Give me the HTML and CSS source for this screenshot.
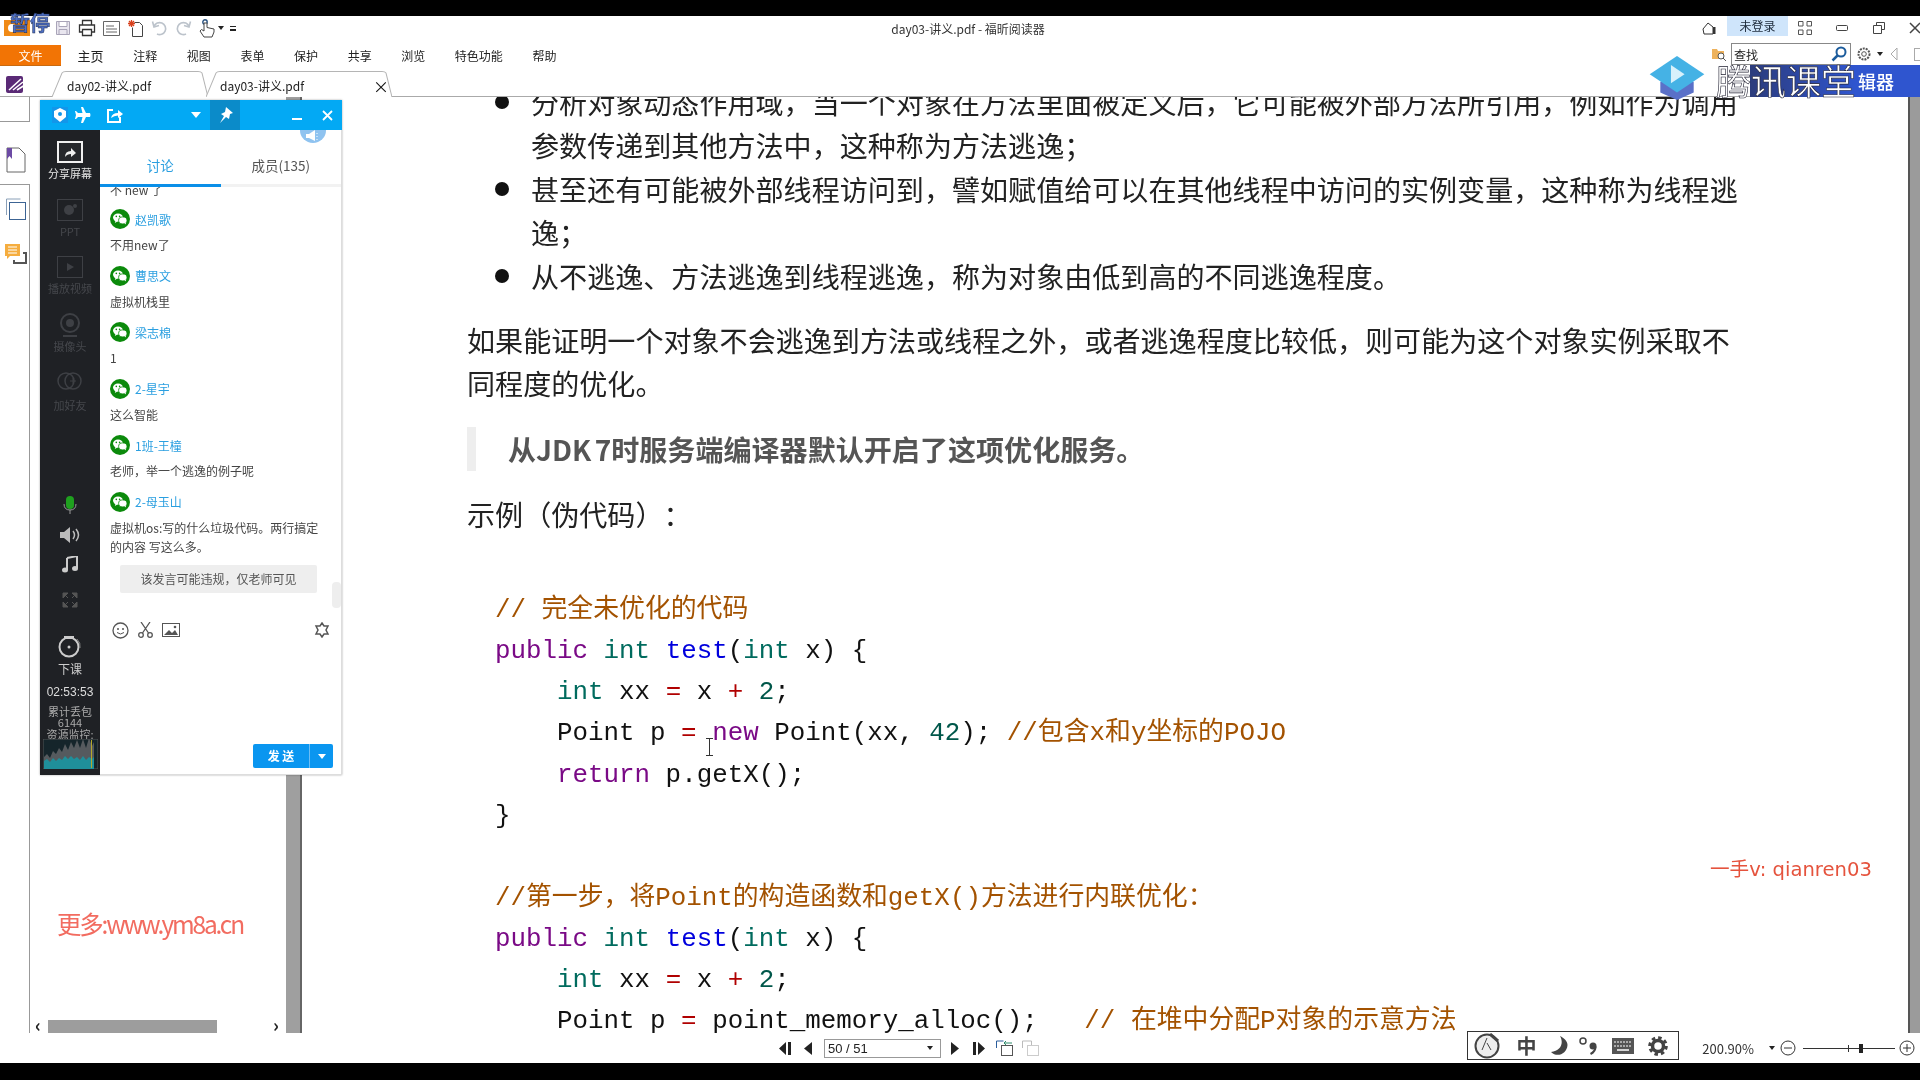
FILE: index.html
```html
<!DOCTYPE html>
<html lang="zh-CN">
<head>
<meta charset="utf-8">
<title>day03-讲义.pdf - 福昕阅读器</title>
<link rel="stylesheet" href="styles.css">
</head>
<body>
<svg class="defs" width="0" height="0" aria-hidden="true">
  <symbol id="wx" viewBox="0 0 20 20">
    <circle cx="10" cy="10" r="10" fill="#0b8a0b"/>
    <ellipse cx="8" cy="8.6" rx="5" ry="4.2" fill="#fff"/>
    <path d="M5.6 11.5l-.8 2.4 2.6-1.3z" fill="#fff"/>
    <ellipse cx="12.8" cy="11.4" rx="4.2" ry="3.5" fill="#fff" stroke="#0b8a0b" stroke-width=".8"/>
    <path d="M14.6 14l1.4 1.6-.2-2.4z" fill="#fff"/>
    <circle cx="6.3" cy="7.4" r=".8" fill="#0b8a0b"/><circle cx="9.6" cy="7.4" r=".8" fill="#0b8a0b"/>
  </symbol>
</svg>
<div class="screen">
  <div class="black-top"></div>
  <header class="titlebar">
    <div class="qat">
      <svg class="qat-logo" width="26" height="16" viewBox="0 0 26 16"><rect width="26" height="16" fill="#f08a16"/><circle cx="8" cy="8" r="4" fill="#fff"/></svg>
      <svg width="16" height="16" viewBox="0 0 16 16"><path d="M1.500 1.500h13v13h-13zM4 1.500v5h8v-5M4 14.500v-5h8v5" fill="#e9e6ef" stroke="#a9a4b8"/></svg>
      <svg width="18" height="18" viewBox="0 0 18 18"><path d="M4.500 6V1.500h9V6M4.500 13H1.500V6h15v7h-3M4.500 10.500h9v6h-9z" fill="none" stroke="#333" stroke-width="1.300"/></svg>
      <svg width="17" height="15" viewBox="0 0 17 15"><path d="M.5.5h16v14H.5zM3 5h8M3 8h11M3 11h11" fill="none" stroke="#666"/></svg>
      <svg width="17" height="18" viewBox="0 0 17 18"><path d="M7.500 3.500h5l3 3v11h-10v-9" fill="#fff" stroke="#444"/><path d="M4.500 1v7M1 4.500h7M2 2l5 5M7 2L2 7" stroke="#d8401c" stroke-width="1.300"/></svg>
      <svg width="17" height="16" viewBox="0 0 17 16"><path d="M3 6.500a6 6 0 1 1 3 7.500M1.500 1.500L3 7l5-1.500" fill="none" stroke="#bcc3cb" stroke-width="1.600"/></svg>
      <svg width="17" height="16" viewBox="0 0 17 16"><path d="M14 6.500a6 6 0 1 0-3 7.500M15.500 1.500L14 7 9 5.500" fill="none" stroke="#bcc3cb" stroke-width="1.600"/></svg>
      <svg width="16" height="19" viewBox="0 0 16 19"><circle cx="6" cy="3" r="2.200" fill="none" stroke="#28517f" stroke-width="1.400"/><path d="M5 4v8L2.500 10.500 1 12l4 6h8l2-5v-3l-7-1.500V4z" fill="#fff" stroke="#444"/></svg>
      <span class="caret-dark qat-caret"></span>
      <span class="caret-bar"></span>
    </div>
    <div class="doc-title">day03-讲义.pdf - 福昕阅读器</div>
    <div class="win">
      <svg width="14" height="13" viewBox="0 0 14 13"><path d="M1 7l5-6 5 4v7H2z" fill="#fff" stroke="#333"/><path d="M11 5h2.500v7H11z" fill="#333"/></svg>
      <span class="login">未登录</span>
      <svg width="14" height="14" viewBox="0 0 14 14"><path d="M.500.500h4.500v4.500H.500zM9 .500h4.500v4.500H9zM.500 9h4.500v4.500H.500zM9 9h4.500v4.500H9z" fill="none" stroke="#555"/></svg>
      <svg class="w-min" width="12" height="6" viewBox="0 0 12 6"><rect x=".5" y=".5" width="11" height="5" rx="1" fill="none" stroke="#444"/></svg>
      <svg class="w-res" width="12" height="12" viewBox="0 0 12 12"><path d="M3.500 3V.500h8v7H9M.500 3.500h8v8h-8z" fill="none" stroke="#444"/></svg>
      <svg class="w-close" width="12" height="12" viewBox="0 0 12 12"><path d="M1 1l10 10M11 1L1 11" stroke="#444" stroke-width="1.500"/></svg>
    </div>
  </header>
  <nav class="ribbon">
    <span class="file-btn">文件</span>
    <span class="r-tab home">主页</span><span class="r-tab">注释</span><span class="r-tab">视图</span><span class="r-tab">表单</span><span class="r-tab">保护</span><span class="r-tab">共享</span><span class="r-tab">浏览</span><span class="r-tab">特色功能</span><span class="r-tab">帮助</span>
    <div class="find">
      <svg width="14" height="14" viewBox="0 0 14 14"><path d="M0 2h5l1 2h6v8H0z" fill="#eeb25c"/><circle cx="9" cy="9" r="3" fill="#fff" stroke="#555"/><path d="M11 11l3 3" stroke="#555"/></svg>
      <div class="find-box"><span>查找</span>
        <svg width="16" height="16" viewBox="0 0 16 16"><circle cx="10" cy="6" r="4.500" fill="none" stroke="#1c5c9c" stroke-width="2"/><path d="M6.500 9.500L1.500 14.500" stroke="#1c5c9c" stroke-width="2.500"/></svg>
      </div>
      <svg width="16" height="16" viewBox="0 0 16 16"><circle cx="8" cy="8" r="5.500" fill="none" stroke="#555" stroke-dasharray="2 1" stroke-width="2"/><circle cx="8" cy="8" r="2.300" fill="none" stroke="#555"/></svg>
      <span class="caret-dark"></span>
      <svg class="find-back" width="8" height="14" viewBox="0 0 8 14"><path d="M7 1L1 7l6 6z" fill="#fff" stroke="#aaa"/></svg>
      <span class="find-end"></span>
    </div>
  </nav>
  <div class="tabstrip">
    <svg class="app-mark" width="20" height="17" viewBox="0 0 20 17"><rect width="17" height="17" rx="2" fill="#5a2a76"/><path d="M3 14L15 3M7 14L17 6M11 14L19 9" stroke="#fff" stroke-width="1.600"/></svg>
    <div class="tab tab-a">
      <svg class="tab-shape" viewBox="0 0 156 25" preserveAspectRatio="none"><path d="M0 25L10 2Q11 .500 14 .500H146Q149 .500 150 2L156 25" fill="#fff" stroke="#b5b5b5"/></svg>
      <span class="tab-label">day02-讲义.pdf</span>
    </div>
    <div class="tab tab-b">
      <svg class="tab-shape" viewBox="0 0 186 25" preserveAspectRatio="none"><path d="M0 25L10 2Q11 .500 14 .500H176Q179 .500 180 2L186 25" fill="#fff" stroke="#b5b5b5"/></svg>
      <span class="tab-label">day03-讲义.pdf</span>
      <span class="tab-x">×</span>
    </div>
  </div>

  <div class="workspace">
    <aside class="siderail">
      <div class="rail-cap"></div>
      <div class="rail-book">
        <svg width="20" height="26" viewBox="0 0 20 26"><path d="M1 1h12l6 6v18H1z" fill="#fff" stroke="#666"/><path d="M1 1h5v11l-2.500-3L1 12z" fill="#6c4aa4"/></svg>
      </div>
      <div class="rail-body">
        <svg width="20" height="22" viewBox="0 0 20 22"><path d="M.5 17V1h14" fill="none" stroke="#8aa0b8"/><rect x="3.500" y="4.500" width="16" height="17" fill="#fff" stroke="#3c6494"/></svg>
        <svg width="22" height="22" viewBox="0 0 22 22"><path d="M0 1h15v12H5l-3 3v-3H0z" fill="#f5ad3f"/><path d="M3 4h9M3 7h9M3 10h9" stroke="#fff"/><path d="M18 10h3v10H9v-3" fill="none" stroke="#555" stroke-width="2"/></svg>
      </div>
    </aside>
    <section class="leftpanel">
      <div class="lp-body">
        <div class="lp-inner">
          <span class="ym8">更多:www.ym8a.cn</span>
        </div>
        <div class="lp-hbar">
          <span class="lp-arrow">‹</span>
          <span class="lp-thumb"></span>
          <span class="lp-arrow">›</span>
        </div>
      </div>
      <div class="lp-vbar"></div>
    </section>
    <main class="doc">
      <div class="page">
        <ul class="bullets">
          <li>分析对象动态作用域，当一个对象在方法里面被定义后，它可能被外部方法所引用，例如作为调用参数传递到其他方法中，这种称为方法逃逸；</li>
          <li>甚至还有可能被外部线程访问到，譬如赋值给可以在其他线程中访问的实例变量，这种称为线程逃逸；</li>
          <li>从不逃逸、方法逃逸到线程逃逸，称为对象由低到高的不同逃逸程度。</li>
        </ul>
        <p class="para">如果能证明一个对象不会逃逸到方法或线程之外，或者逃逸程度比较低，则可能为这个对象实例采取不同程度的优化。</p>
        <blockquote class="quote">从JDK 7时服务端编译器默认开启了这项优化服务。</blockquote>
        <p class="para example">示例（伪代码）：</p>
        <div class="code">
          <div class="ln"><span class="c">// 完全未优化的代码</span></div>
          <div class="ln"><span class="k">public</span> <span class="t">int</span> <span class="f">test</span>(<span class="t">int</span> x) {</div>
          <div class="ln">    <span class="t">int</span> xx <span class="o">=</span> x <span class="o">+</span> <span class="n">2</span>;</div>
          <div class="ln">    Point p <span class="o">=</span> <span class="k">new</span> Point(xx, <span class="n">42</span>); <span class="c">//包含x和y坐标的POJO</span></div>
          <div class="ln">    <span class="k">return</span> p.getX();</div>
          <div class="ln">}</div>
          <div class="ln blank"></div>
          <div class="ln"><span class="c">//第一步，将Point的构造函数和getX()方法进行内联优化：</span></div>
          <div class="ln"><span class="k">public</span> <span class="t">int</span> <span class="f">test</span>(<span class="t">int</span> x) {</div>
          <div class="ln">    <span class="t">int</span> xx <span class="o">=</span> x <span class="o">+</span> <span class="n">2</span>;</div>
          <div class="ln">    Point p <span class="o">=</span> point_memory_alloc();   <span class="c">// 在堆中分配P对象的示意方法</span></div>
        </div>
      </div>
      <div class="doc-vbar"></div>
    </main>
  </div>

  <footer class="statusbar">
    <div class="pager">
      <svg width="14" height="13" viewBox="0 0 14 13"><path d="M8 0v13L1 6.500zM10 0h3v13h-3z" fill="#222"/></svg>
      <svg class="pg-prev" width="8" height="13" viewBox="0 0 8 13"><path d="M8 0v13L0 6.500z" fill="#222"/></svg>
      <div class="pg-input"><span>50 / 51</span><i></i></div>
      <svg width="8" height="13" viewBox="0 0 8 13"><path d="M0 0v13l8-6.500z" fill="#222"/></svg>
      <svg class="pg-last" width="14" height="13" viewBox="0 0 14 13"><path d="M6 0v13l7-6.500zM1 0h3v13H1z" fill="#222"/></svg>
      <svg class="pg-a" width="17" height="16" viewBox="0 0 17 16"><path d="M.5 8V1h7" fill="none" stroke="#2a5d9c"/><rect x="5.500" y="5.500" width="11" height="10" fill="#fff" stroke="#555"/><path d="M8 3h8M8 3l2-2M8 3l2 2" stroke="#2d8a6a" fill="none"/></svg>
      <svg class="pg-b" width="17" height="16" viewBox="0 0 17 16"><path d="M.5 8V1h9v4" fill="none" stroke="#bbb"/><rect x="5.500" y="5.500" width="11" height="10" fill="#fff" stroke="#ccc"/></svg>
    </div>
    <div class="zoomctl">
      <span class="zoom-val">200.90%</span>
      <span class="caret-dark zoom-caret"></span>
      <svg width="16" height="16" viewBox="0 0 16 16"><circle cx="8" cy="8" r="7" fill="none" stroke="#333"/><path d="M4 8h8" stroke="#333"/></svg>
      <div class="slider"><i class="tick"></i><i class="thumb"></i></div>
      <svg width="16" height="16" viewBox="0 0 16 16"><circle cx="8" cy="8" r="7" fill="none" stroke="#333"/><path d="M4 8h8M8 4v8" stroke="#333"/></svg>
    </div>
  </footer>
  <div class="black-bottom"></div>

  <!-- overlays -->
  <div class="pause-mark">暂停</div>

  <div class="brand">
    <div class="brand-strip"><span class="brand-small">辑器</span></div>
    <svg class="brand-cap" width="72" height="58" viewBox="0 0 72 58"><path d="M14 34v14l22 10 22-10V34z" fill="#5a70c8"/><path d="M36 0l36 24-36 24L0 24z" fill="#45b2e5"/><path d="M28 12l18 12-18 12z" fill="#d8f1fb"/></svg>
    <span class="brand-name">腾讯课堂</span>
  </div>

  <div class="qianren">一手v: qianren03</div>

  <svg class="ibeam" width="9" height="18" viewBox="0 0 9 18"><path d="M1 .5h7M4.500.500v17M1 17.500h7" stroke="#333" fill="none"/></svg>

  <div class="ime">
    <svg width="26" height="26" viewBox="0 0 26 26"><circle cx="13" cy="13" r="11.500" fill="#eee" stroke="#444" stroke-width="2"/><path d="M13 5l-5 12M13 10l4 7" fill="none" stroke="#444"/><path d="M16 1l8 7" stroke="#444" stroke-width="3"/></svg>
    <span class="ime-zh">中</span>
    <svg width="17" height="20" viewBox="0 0 17 20"><path d="M9 0C13 7 10 15 0 16 6 22 16 18 16.500 9 16.500 5 13 2 9 0z" fill="#444"/></svg>
    <svg class="ime-comma" width="18" height="18" viewBox="0 0 18 18"><circle cx="4" cy="4" r="3" fill="none" stroke="#444" stroke-width="1.500"/><circle cx="14" cy="9" r="3.500" fill="#444"/><path d="M16.500 9.500q0 5-5 7.500" stroke="#444" stroke-width="2.200" fill="none"/></svg>
    <svg width="22" height="16" viewBox="0 0 22 16"><rect width="22" height="16" fill="#555"/><path d="M2 4h18M2 8h18" stroke="#fff" stroke-dasharray="2 1"/><path d="M5 12h12" stroke="#fff" stroke-width="1.500"/></svg>
    <svg width="20" height="20" viewBox="0 0 20 20"><circle cx="10" cy="10" r="5.500" fill="none" stroke="#444" stroke-width="3.500"/><circle cx="10" cy="10" r="8.300" fill="none" stroke="#444" stroke-width="3" stroke-dasharray="3.500 3"/></svg>
  </div>

  <!-- classroom window floating over the reader -->
  <div class="classroom">
    <div class="cr-bar">
      <span class="cr-logo"><svg width="16" height="16" viewBox="0 0 16 16"><path d="M8 1l6 3v6l-6 5-6-5V4z" fill="#fff"/><circle cx="8" cy="7" r="2" fill="#1296ea"/></svg></span>
      <svg width="16" height="16" viewBox="0 0 16 16"><path d="M15 6h-4L8 0H6l1.500 6H3L1 4H0l1 4-1 4h1l2-2h4.500L6 16h2l3-6h4q1-2 0-4z" fill="#fff"/></svg>
      <svg class="cr-share" width="16" height="15" viewBox="0 0 16 15"><path d="M6 2H1v12h12V9" fill="none" stroke="#fff" stroke-width="2"/><path d="M4 10q1-5 7-5V2l5 4-5 4V7.500q-4 0-7 2.500z" fill="#fff"/></svg>
      <span class="cr-caret"></span>
      <span class="cr-pin"><svg width="16" height="16" viewBox="0 0 16 16"><path d="M9 0l7 6-3 1-1 5-3-2-6 6 4-7-3-2 4-2z" fill="#fff"/></svg></span>
      <span class="cr-min"></span>
      <svg class="cr-x" width="11" height="11" viewBox="0 0 11 11"><path d="M1 1l9 9M10 1l-9 9" stroke="#fff" stroke-width="1.800"/></svg>
    </div>
    <div class="cr-main">
      <div class="cr-rail">
        <div class="rail-item on">
          <svg width="26" height="22" viewBox="0 0 26 22"><rect x="1" y="1" width="24" height="20" fill="#26282c" stroke="#f0f0f0" stroke-width="2"/><path d="M8 16q0-6 6-6V7l5 5-5 4v-3q-4 0-6 3z" fill="#f0f0f0"/></svg>
          <span>分享屏幕</span>
        </div>
        <div class="rail-item">
          <svg width="26" height="22" viewBox="0 0 26 22"><rect x=".5" y=".5" width="25" height="21" fill="none" stroke="#3e4045"/><circle cx="12" cy="11" r="5" fill="#3e4045"/><circle cx="18" cy="7" r="2" fill="#3e4045"/></svg>
          <span>PPT</span>
        </div>
        <div class="rail-item">
          <svg width="26" height="22" viewBox="0 0 26 22"><rect x=".5" y=".5" width="25" height="21" fill="none" stroke="#3e4045"/><path d="M10 7l7 4-7 4z" fill="#3e4045"/></svg>
          <span>播放视频</span>
        </div>
        <div class="rail-item">
          <svg width="22" height="24" viewBox="0 0 22 24"><circle cx="11" cy="10" r="9" fill="none" stroke="#3e4045" stroke-width="2"/><circle cx="11" cy="10" r="4" fill="#3e4045"/><path d="M4 23h14" stroke="#3e4045" stroke-width="2"/></svg>
          <span>摄像头</span>
        </div>
        <div class="rail-item friend">
          <svg width="26" height="22" viewBox="0 0 26 22"><circle cx="9" cy="10" r="8" fill="none" stroke="#3e4045" stroke-width="1.500"/><circle cx="16" cy="10" r="8" fill="none" stroke="#3e4045" stroke-width="1.500"/><path d="M13 10h6M16 7v6" stroke="#3e4045"/></svg>
          <span>加好友</span>
        </div>
        <div class="rail-ctl first">
          <svg width="14" height="18" viewBox="0 0 14 18"><rect x="3" y="0" width="8" height="13" rx="4" fill="#1fa01f"/><path d="M1 8q0 6 6 6t6-6M7 14v4" fill="none" stroke="#999"/></svg>
        </div>
        <div class="rail-ctl">
          <svg width="20" height="18" viewBox="0 0 20 18"><path d="M0 6h4l6-5v16l-6-5H0z" fill="#bbb"/><path d="M13 5q3 4 0 8M16 3q5 6 0 12" fill="none" stroke="#bbb" stroke-width="1.500"/></svg>
        </div>
        <div class="rail-ctl">
          <svg width="16" height="17" viewBox="0 0 16 17"><path d="M5 2l10-2v12" fill="none" stroke="#ccc" stroke-width="2"/><path d="M5 2v12" stroke="#ccc" stroke-width="2"/><ellipse cx="3" cy="14" rx="3" ry="2.500" fill="#ccc"/><ellipse cx="13" cy="12.500" rx="3" ry="2.500" fill="#ccc"/></svg>
        </div>
        <div class="rail-ctl expand">
          <svg width="16" height="16" viewBox="0 0 16 16"><path d="M1 1h5L1 6zM15 1v5l-5-5zM1 15v-5l5 5zM15 15h-5l5-5zM3 3l3 3M13 3l-3 3M3 13l3-3M13 13l-3-3" fill="#555" stroke="#555"/></svg>
        </div>
        <div class="rail-end">
          <svg width="24" height="28" viewBox="0 0 24 28"><circle cx="11" cy="16" r="9.500" fill="none" stroke="#ccc" stroke-width="2"/><circle cx="11" cy="16" r="1.500" fill="#ccc"/><path d="M6 5h10v3H6z" fill="#ccc"/><path d="M19 8q4 4 3 9" fill="none" stroke="#888"/></svg>
          <span class="end-label">下课</span>
        </div>
        <div class="rail-time">02:53:53</div>
        <div class="rail-stat">累计丢包<br>6144<br>资源监控:</div>
        <svg class="rail-chart" width="55" height="30" viewBox="0 0 55 30" preserveAspectRatio="none"><rect width="55" height="30" fill="#15252b" stroke="#555"/><path d="M1 18l3-3 3 4 3-7 3 3 3-6 3 4 3-8 3 6 3-8 3 6 3-8 3 8 3-9 3 9 3-10 3 8 2-4v26H1z" fill="#555a5e"/><path d="M1 22l3-2 3 3 3-4 3 3 3-3 3 2 3-4 3 3 3-3 3 3 3-2 3 3 3-4 3 4 3-3 3 2 2-2v14H1z" fill="#1f8f9a"/><path d="M48.500 1v28" stroke="#b5a72a"/></svg>
      </div>
      <div class="cr-chat">
        <span class="notice-badge"><svg width="14" height="12" viewBox="0 0 14 12"><path d="M0 4h3l6-4v11L3 8H0z" fill="#fff"/><path d="M11 3v1M11 6v1M11 9v1" stroke="#fff"/></svg></span>
        <div class="cr-tabs">
          <span class="cr-tab active">讨论</span>
          <span class="cr-tab">成员(135)</span>
        </div>
        <div class="msgs">
          <p class="msg-text clipped">不 new 了</p>
          <div class="msg"><div class="msg-head"><svg width="20" height="20"><use href="#wx"/></svg><span>赵凯歌</span></div><p class="msg-text">不用new了</p></div>
          <div class="msg"><div class="msg-head"><svg width="20" height="20"><use href="#wx"/></svg><span>曹思文</span></div><p class="msg-text">虚拟机栈里</p></div>
          <div class="msg"><div class="msg-head"><svg width="20" height="20"><use href="#wx"/></svg><span>梁志棉</span></div><p class="msg-text">1</p></div>
          <div class="msg"><div class="msg-head"><svg width="20" height="20"><use href="#wx"/></svg><span>2-星宇</span></div><p class="msg-text">这么智能</p></div>
          <div class="msg"><div class="msg-head"><svg width="20" height="20"><use href="#wx"/></svg><span>1班-王橦</span></div><p class="msg-text">老师，举一个逃逸的例子呢</p></div>
          <div class="msg last"><div class="msg-head"><svg width="20" height="20"><use href="#wx"/></svg><span>2-母玉山</span></div><p class="msg-text">虚拟机os:写的什么垃圾代码。两行搞定的内容 写这么多。</p></div>
          <div class="pill">该发言可能违规，仅老师可见</div>
        </div>
        <span class="chat-thumb"></span>
        <div class="chat-tools">
          <svg width="17" height="17" viewBox="0 0 17 17"><circle cx="8.500" cy="8.500" r="7.500" fill="none" stroke="#555" stroke-width="1.300"/><circle cx="6" cy="7" r="1" fill="#555"/><circle cx="11" cy="7" r="1" fill="#555"/><path d="M5 10.500q3.500 3 7 0" fill="none" stroke="#555"/></svg>
          <svg width="15" height="16" viewBox="0 0 15 16"><circle cx="3" cy="13" r="2.300" fill="none" stroke="#555" stroke-width="1.300"/><circle cx="12" cy="13" r="2.300" fill="none" stroke="#555" stroke-width="1.300"/><path d="M4.500 11L12 0M10.500 11L3 0" stroke="#555" stroke-width="1.300"/></svg>
          <svg width="18" height="14" viewBox="0 0 18 14"><rect x=".5" y=".5" width="17" height="13" fill="none" stroke="#555"/><path d="M2 12l5-5 3 3 3-3 3 5z" fill="#555"/><circle cx="13" cy="4" r="1.300" fill="#555"/></svg>
          <svg class="tools-gear" width="16" height="16" viewBox="0 0 16 16"><path d="M8 1l2 3h4l-2 4 2 4h-4l-2 3-2-3H2l2-4-2-4h4z" fill="none" stroke="#555" stroke-width="1.500"/></svg>
        </div>
        <div class="send-row">
          <div class="send"><span class="send-label">发 送</span><span class="send-drop"></span></div>
        </div>
      </div>
    </div>
  </div>
</div>
</body>
</html>
```

FILE: styles.css
```css
* { box-sizing: border-box; }
html, body { margin: 0; padding: 0; background: #000; }
body { font-family: "Noto Sans CJK SC", "Liberation Sans", sans-serif; color: #222; text-spacing-trim: space-all; }
.defs { position: absolute; }
p, ul, blockquote { margin: 0; padding: 0; }

.screen {
  position: relative;
  width: 1920px;
  height: 1080px;
  overflow: hidden;
  display: flex;
  flex-direction: column;
  background: #fff;
  filter: blur(.3px);
}
.black-top { height: 16px; background: #000; flex: none; }
.black-bottom { height: 17px; background: #000; flex: none; }

/* title bar */
.titlebar {
  height: 24px;
  flex: none;
  display: grid;
  grid-template-columns: 1fr auto 1fr;
  align-items: center;
  background: #fff;
}
.qat { display: flex; align-items: center; gap: 7px; padding-left: 4px; }
.qat-logo { margin-right: 18px; }
.caret-dark {
  width: 0; height: 0;
  border-left: 3px solid transparent;
  border-right: 3px solid transparent;
  border-top: 4px solid #222;
  display: inline-block;
}
.qat-caret { margin-left: -4px; }
.caret-bar { width: 6px; height: 5px; border-top: 1px solid #222; border-bottom: 2px solid #222; margin-left: -1px; }
.doc-title { font-size: 12px; color: #333; padding-left: 16px; }
.win { display: flex; align-items: center; justify-content: flex-end; height: 24px; }
.login {
  width: 61px; height: 20px; margin: -4px 10px 0 11px;
  background: #cfe5fb; color: #1d2a3a;
  font-size: 12px; line-height: 20px; text-align: center;
}
.w-min { margin-left: 24px; }
.w-res { margin-left: 25px; }
.w-close { margin-left: 24px; margin-right: -1px; }

/* ribbon */
.ribbon { height: 30px; flex: none; display: flex; align-items: center; gap: 29.6px; background: #fff; font-size: 12px; color: #222; }
.file-btn {
  width: 61px; height: 21px; margin-right: -13px;
  background: #f27405; color: #fff; font-size: 12px;
  line-height: 21px; text-align: center;
  border-bottom: 1px solid #c96a10;
}
.home { font-size: 13px; }
.find { margin-left: auto; display: flex; align-items: center; gap: 5px; margin-top: -2px; }
.find-box {
  width: 120px; height: 22px;
  border: 1px solid #888;
  display: flex; align-items: center; justify-content: space-between;
  padding: 0 3px 0 2px; font-size: 12px; background: #fff;
}
.find-back { margin-left: 2px; }
.find-end { width: 6px; height: 13px; margin-left: 11px; border: 1px solid #aaa; border-right: 0; }

/* tabs */
.tabstrip { height: 27px; flex: none; display: flex; align-items: flex-end; border-bottom: 1px solid #aaa; padding-left: 6px; background: #fff; }
.app-mark { align-self: center; margin: 2px 26px 0 0; }
.tab { position: relative; height: 26px; display: flex; align-items: center; font-size: 12px; margin-bottom: -1px; padding-top: 3px; }
.tab-a { width: 156px; padding-left: 15px; }
.tab-b { width: 186px; padding-left: 14px; margin-left: -2px; }
.tab-shape { position: absolute; left: 0; top: 0; width: 100%; height: 100%; }
.tab-label { position: relative; }
.tab-x { position: relative; margin-left: auto; margin-right: 3px; font-size: 16px; line-height: 1; color: #111; }

/* workspace */
.workspace { flex: 1; min-height: 0; display: flex; background: #fff; }
.siderail { width: 30px; flex: none; display: flex; flex-direction: column; }
.rail-cap { height: 25px; flex: none; border-right: 1px solid #999; border-bottom: 1px solid #999; }
.rail-book { height: 62px; flex: none; display: flex; justify-content: center; padding: 25px 0 0 2px; }
.rail-body { flex: 1; display: flex; flex-direction: column; align-items: center; padding: 13px 0 0 2px; gap: 23px; border-top: 1px solid #999; border-right: 1px solid #999; }
.leftpanel { width: 272px; flex: none; display: flex; }
.lp-body { flex: 1; display: flex; flex-direction: column; }
.lp-inner { flex: 1; display: flex; flex-direction: column; justify-content: flex-end; padding: 0 0 79px 27px; }
.ym8 { font-size: 24.5px; line-height: 34px; color: #f26c60; letter-spacing: -2.2px; white-space: nowrap; }
.lp-hbar { height: 13px; display: flex; align-items: center; padding-left: 5px; }
.lp-arrow { width: 13px; font-size: 18px; line-height: 13px; font-weight: 700; color: #222; margin-top: -4px; }
.lp-thumb { width: 169px; height: 13px; background: #9d9d9d; margin-right: 56px; }
.lp-vbar { width: 16px; flex: none; background: #9f9f9f; border-right: 2px solid #666; }

.doc { flex: 1; min-width: 0; display: flex; overflow: hidden; position: relative; }
.page { flex: 1; padding-left: 165px; overflow: hidden; color: #222; font-size: 28.07px; line-height: 43px; }
.doc-vbar { width: 12px; flex: none; background: #9b9b9b; border-left: 2px solid #555; }
.bullets { list-style: none; margin: -17px 0 0 64px; width: 1212px; }
.bullets li { position: relative; }
.bullets li + li { margin-top: 1px; }
.bullets li::before {
  content: ""; position: absolute; left: -36px; top: 15px;
  width: 14px; height: 14px; border-radius: 50%; background: #111;
}
.para { width: 1275px; margin-top: 21px; }
.quote { margin-top: 23px; height: 44px; border-left: 9px solid #eee; padding-left: 32px; font-weight: 700; color: #555; word-spacing: -3px; }
.example { margin-top: 21px; }
.code {
  margin: 55px 0 0 28px;
  font-family: "Liberation Mono", "Noto Sans CJK SC", monospace;
  font-size: 25.85px; line-height: 41.15px; color: #111;
}
.ln { white-space: pre; height: 41.15px; }
.code .c { color: #a35200; }
.code .k { color: #7a0a86; }
.code .t { color: #006b5e; }
.code .f { color: #0000dd; }
.code .o { color: #b00000; }
.code .n { color: #00574a; }

/* status bar */
.statusbar { height: 30px; flex: none; display: flex; align-items: center; background: #fff; padding-left: 778px; }
.pager { display: flex; align-items: center; gap: 13px; }
.pg-prev { margin-left: -1px; }
.pg-input {
  width: 117px; height: 19px; border: 1px solid #999; margin: 0 -3px 0 -1px;
  display: flex; align-items: center; justify-content: space-between;
  padding: 0 7px 0 3px; font-family: "Liberation Sans", sans-serif; font-size: 13px; color: #222;
}
.pg-input i { width: 0; height: 0; border-left: 3px solid transparent; border-right: 3px solid transparent; border-top: 4px solid #222; }
.pg-a { margin-left: -3px; }
.pg-b { margin-left: -4px; }
.zoomctl { margin-left: auto; display: flex; align-items: center; padding-right: 5px; }
.zoom-val { font-size: 13px; color: #333; margin-right: 15px; }
.zoom-caret { margin-right: 5px; }
.slider { position: relative; width: 92px; height: 1px; background: #333; margin: 0 4px 0 7px; }
.tick { position: absolute; left: 45px; top: -3px; width: 1px; height: 7px; background: #333; }
.thumb { position: absolute; left: 56px; top: -4px; width: 4px; height: 9px; background: #222; }

/* overlays */
.pause-mark {
  position: absolute; left: 10px; top: 10px;
  font-size: 20px; line-height: 26px; font-weight: 700; color: #4f70c4;
  -webkit-text-stroke: .5px #1c2b50;
}
.brand { position: absolute; left: 1642px; top: 54px; width: 278px; height: 43px; }
.brand-strip {
  position: absolute; left: 108px; top: 11px; width: 170px; height: 32px;
  background: linear-gradient(90deg, #2c3c7c, #2f55cf 62%, #2f55cf);
  display: flex; align-items: center; padding-left: 108px;
}
.brand-small { color: #fff; font-size: 18px; font-weight: 500; white-space: nowrap; }
.brand-cap { position: absolute; left: 6px; top: 2px; width: 58px; height: 44px; }
.brand-name {
  position: absolute; left: 74px; top: 3px;
  font-size: 35px; line-height: 46px; font-weight: 400; color: #fff;
  -webkit-text-stroke: .6px #223;
  white-space: nowrap;
}
.qianren { position: absolute; left: 1710px; top: 856px; font-family: "DejaVu Sans", "Noto Sans CJK SC", sans-serif; font-size: 19.6px; line-height: 28px; color: #e5533d; white-space: nowrap; }
.ibeam { position: absolute; left: 705px; top: 738px; }
.ime {
  position: absolute; left: 1467px; top: 1031px; width: 212px; height: 29px;
  background: #fff; border: 1px solid #333;
  display: flex; align-items: center; justify-content: space-between; padding: 0 10px 0 6px;
}
.ime-zh { font-size: 20px; font-weight: 700; color: #444; line-height: 1; margin-left: 2px; }
.ime-comma { margin-left: -3px; }

/* classroom window */
.classroom {
  position: absolute; left: 40px; top: 100px; width: 302px; height: 675px;
  display: flex; flex-direction: column;
  background: #fff;
  box-shadow: 0 0 2px rgba(0,0,0,.35);
}
.cr-bar { height: 30px; flex: none; background: #03a9f4; display: flex; align-items: center; padding-left: 12px; gap: 7px; }
.cr-logo { width: 16px; height: 16px; display: flex; background: #1296ea; }
.cr-share { margin-left: 9px; }
.cr-caret { margin-left: 61px; width: 0; height: 0; border-left: 5px solid transparent; border-right: 5px solid transparent; border-top: 6px solid #fff; }
.cr-pin { width: 30px; height: 30px; margin-left: 2px; background: #0b8bc9; display: flex; align-items: center; justify-content: center; }
.cr-min { width: 10px; height: 2px; background: #fff; margin: 8px 0 0 45px; }
.cr-x { margin-left: 13px; }
.cr-main { flex: 1; min-height: 0; display: flex; }

.cr-rail { width: 60px; flex: none; background: #1f2125; display: flex; flex-direction: column; align-items: center; color: #45474c; }
.rail-item { height: 57.5px; width: 100%; flex: none; display: flex; flex-direction: column; align-items: center; padding-top: 9px; }
.rail-item svg { height: 26px; flex: none; }
.rail-item span { font-size: 11px; line-height: 14px; white-space: nowrap; margin-top: 1px; }
.rail-item.on span { color: #e6e6e6; }
.rail-item.friend span { margin-top: 3px; }
.rail-ctl { height: 30px; flex: none; display: flex; align-items: center; justify-content: center; }
.rail-ctl.first { margin-top: 72px; }
.rail-ctl.expand { margin-top: 5px; }
.rail-end { margin-top: 16px; display: flex; flex-direction: column; align-items: center; flex: none; }
.end-label { font-size: 12px; line-height: 14px; color: #ccc; margin-top: 3px; }
.rail-time { font-family: "Liberation Sans", sans-serif; font-size: 12px; line-height: 16px; color: #ddd; margin-top: 8px; }
.rail-stat { font-size: 11px; line-height: 11.500px; color: #aaa; text-align: center; margin-top: 6px; white-space: nowrap; }
.rail-chart { margin-top: -1px; flex: none; }

.cr-chat { flex: 1; min-width: 0; position: relative; display: flex; flex-direction: column; border-right: 1px solid #ddd; border-bottom: 1px solid #ddd; }
.notice-badge {
  position: absolute; left: 200px; top: -12px; width: 26px; height: 25px;
  border-radius: 50%; background: #8fc3f0;
  display: flex; align-items: center; justify-content: center; padding-top: 10px;
  clip-path: inset(12px 0 0 0);
}
.cr-tabs { height: 57px; flex: none; display: flex; border-bottom: 3px solid #f2f2f2; }
.cr-tab { width: 121px; margin-bottom: -3px; text-align: center; font-size: 13.5px; line-height: 18px; padding-top: 26px; color: #555; border-bottom: 3px solid transparent; }
.cr-tab.active { color: #2a9fe0; border-bottom-color: #0a8fe8; }
.msgs { height: 411px; flex: none; overflow: hidden; padding-left: 10px; }
.msg-text { font-size: 12px; line-height: 19px; color: #444; width: 212px; }
.clipped { margin-top: -6px; margin-bottom: 9px; line-height: 18px; }
.msg { margin-bottom: 10.5px; }
.msg.last { margin-bottom: 9px; }
.msg-head { height: 22px; display: flex; align-items: center; gap: 5px; font-size: 12px; color: #2a9fe0; margin-bottom: 5px; }
.pill { width: 197px; height: 28px; margin-left: 10px; background: #eee; border-radius: 2px; text-align: center; font-size: 12px; line-height: 28px; color: #555; }
.chat-thumb { position: absolute; right: 0; top: 452px; width: 9px; height: 26px; border-radius: 4px; background: #eee; }
.chat-tools { height: 40px; margin-top: 12px; flex: none; display: flex; align-items: center; gap: 9px; padding-left: 12px; }
.tools-gear { margin-left: 125px; }
.send-row { flex: 1; display: flex; justify-content: flex-end; align-items: flex-end; padding: 0 8px 6px 0; }
.send { width: 80px; height: 24px; border-radius: 2px; background: #0a96f0; display: flex; color: #fff; }
.send-label { width: 57px; font-size: 12px; font-weight: 700; line-height: 24px; text-align: center; border-right: 1px solid #6cbdf5; }
.send-drop { flex: 1; position: relative; }
.send-drop::after { content: ""; position: absolute; left: 8px; top: 10px; border-left: 4px solid transparent; border-right: 4px solid transparent; border-top: 5px solid #fff; }
```
